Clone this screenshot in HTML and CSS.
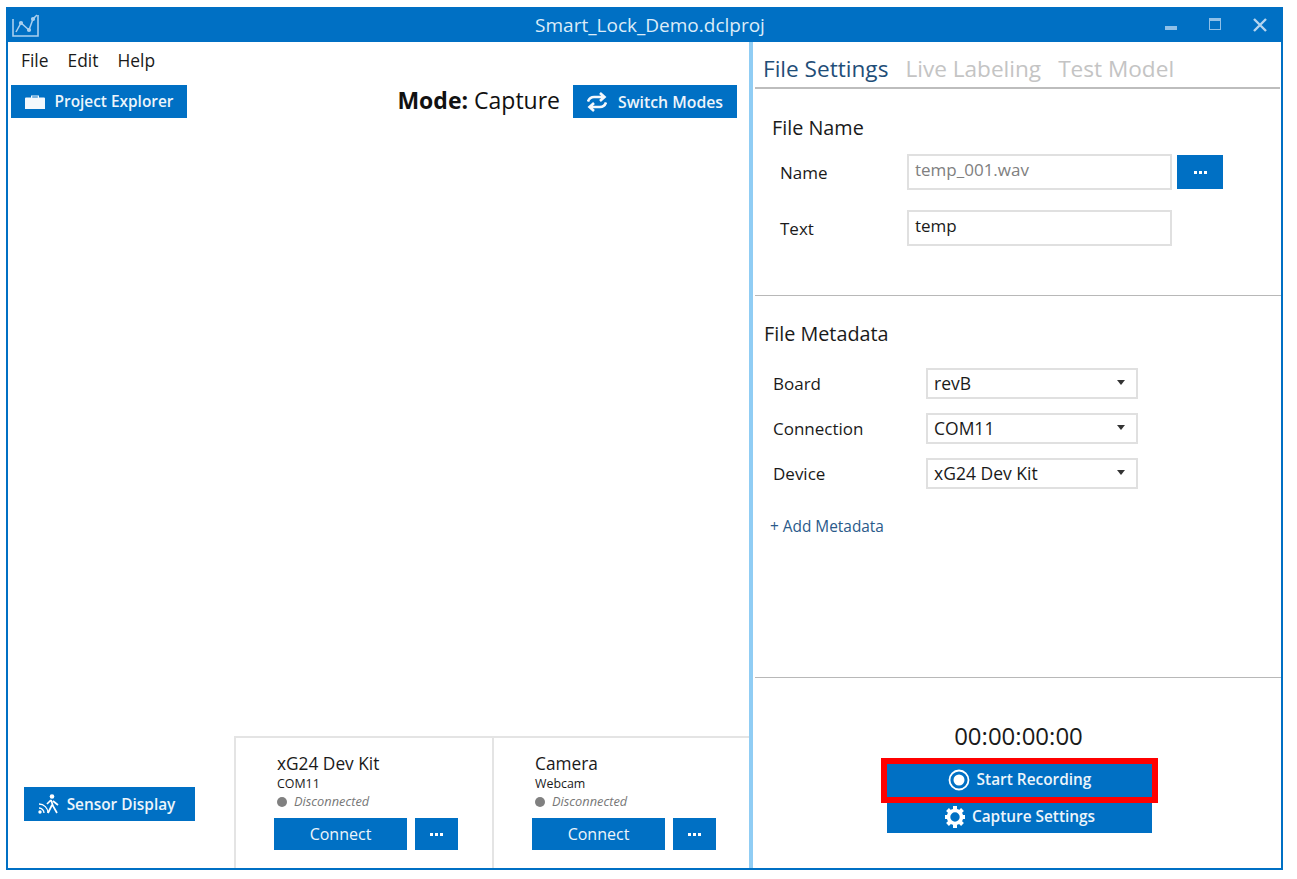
FILE: index.html
```html
<!DOCTYPE html>
<html>
  <head>
    <title>Smart_Lock_Demo.dclproj</title>
    <link rel="stylesheet" href="styles.css">
  </head>
  <body>
    <div class="window">
      <div class="titlebar">
        <svg class="app-icon" width="28" height="26" viewBox="0 0 28 26" fill="none" stroke="#a9cfee" stroke-width="1.6">
          <path d="M1 7v17h25V3"/>
          <path d="M4 20l5-9 8 7 4-11 4-4" stroke-width="1.500"/>
          <circle cx="9" cy="11" r="1.300" fill="#a9cfee"/>
          <circle cx="17" cy="18" r="1.300" fill="#a9cfee"/>
          <circle cx="21" cy="7" r="1.300" fill="#a9cfee"/>
        </svg>
        <div class="title">Smart_Lock_Demo.dclproj</div>
        <div class="window-controls">
          <svg width="14" height="14" viewBox="0 0 14 14"><rect x="1" y="8" width="12" height="4" fill="#8fc0e8"/></svg>
          <svg width="14" height="14" viewBox="0 0 14 14" fill="none" stroke="#8fc0e8"><rect x="1.500" y="0.500" width="11" height="11"/><rect x="1" y="0" width="12" height="3" fill="#8fc0e8" stroke="none"/></svg>
          <svg width="14" height="14" viewBox="0 0 14 14" stroke="#b5d5ef" stroke-width="2.400"><path d="M1 1l12 12M13 1L1 13"/></svg>
        </div>
      </div>
      <div class="panes">
        <div class="left-pane">
          <div class="menu">
            <span>File</span>
            <span>Edit</span>
            <span>Help</span>
          </div>
          <div class="toolbar">
            <button class="btn btn-explorer">
              <svg width="20" height="14" viewBox="0 0 20 14" fill="#f4f8fc"><path d="M1 2.500h18a1 1 0 0 1 1 1V14H0V3.500a1 1 0 0 1 1-1zM6 2.500V0.500h8v2h-1.200V1.500H7.200v1z"/></svg>
              Project Explorer
            </button>
            <div class="mode-group">
              <div class="mode"><b>Mode:</b> Capture</div>
              <button class="btn btn-switch">
                <svg width="20" height="20" viewBox="0 0 20 20" fill="none" stroke="#f4f8fc" stroke-width="2.600"><path d="M1 9.500C2 6.500 4 5 7 5h10M13 1l4.500 4L13 9M19 10.500C18 13.500 16 15 13 15H3M7 11l-4.500 4L7 19"/></svg>
                Switch Modes
              </button>
            </div>
          </div>
          <div class="bottom-row">
            <button class="btn btn-sensor">
              <svg width="22" height="20" viewBox="0 0 22 20" fill="none" stroke="#fff" stroke-width="1.700">
                <circle cx="14" cy="2.500" r="2.300" fill="#fff" stroke="none"/>
                <path d="M13 6l-4 4M13 6l2 6 4 7M14 11l-4 8M15 7l5 4"/>
                <path d="M1 10a9 9 0 0 1 9 9M1 14a5 5 0 0 1 5 5" stroke-width="1.300"/>
                <circle cx="2" cy="18" r="1.700" fill="#fff" stroke="none"/>
              </svg>
              Sensor Display
            </button>
            <div class="device-cards">
              <div class="device-card">
                <div class="device-name">xG24 Dev Kit</div>
                <div class="device-port">COM11</div>
                <div class="device-status"><i class="dot"></i><em>Disconnected</em></div>
                <div class="device-actions">
                  <button class="btn btn-connect">Connect</button>
                  <button class="btn btn-more"><i></i><i></i><i></i></button>
                </div>
              </div>
              <div class="device-card">
                <div class="device-name">Camera</div>
                <div class="device-port">Webcam</div>
                <div class="device-status"><i class="dot"></i><em>Disconnected</em></div>
                <div class="device-actions">
                  <button class="btn btn-connect">Connect</button>
                  <button class="btn btn-more"><i></i><i></i><i></i></button>
                </div>
              </div>
            </div>
          </div>
        </div>
        <div class="right-pane">
          <div class="tabs">
            <span class="tab active">File Settings</span>
            <span class="tab">Live Labeling</span>
            <span class="tab">Test Model</span>
          </div>
          <div class="section file-name">
            <div class="section-title">File Name</div>
            <div class="field-row">
              <label>Name</label>
              <div class="input disabled">temp_001.wav</div>
              <button class="btn btn-browse"><i></i><i></i><i></i></button>
            </div>
            <div class="field-row">
              <label>Text</label>
              <div class="input">temp</div>
            </div>
          </div>
          <div class="section metadata">
            <div class="section-title">File Metadata</div>
            <div class="meta-row">
              <label>Board</label>
              <div class="select">revB<i class="caret"></i></div>
            </div>
            <div class="meta-row">
              <label>Connection</label>
              <div class="select">COM11<i class="caret"></i></div>
            </div>
            <div class="meta-row">
              <label>Device</label>
              <div class="select">xG24 Dev Kit<i class="caret"></i></div>
            </div>
            <div class="add-meta">+ Add Metadata</div>
          </div>
          <div class="record">
            <div class="timer">00:00:00:00</div>
            <button class="btn btn-record btn-start">
              <svg width="22" height="22" viewBox="0 0 22 22"><circle cx="11" cy="11" r="9.500" fill="none" stroke="#fff" stroke-width="1.800"/><circle cx="11" cy="11" r="5.500" fill="#fff"/></svg>
              Start Recording
            </button>
            <button class="btn btn-record btn-settings">
              <svg width="22" height="22" viewBox="0 0 22 22"><circle cx="11" cy="11" r="6.500" fill="none" stroke="#fff" stroke-width="3.600"/><path d="M11 0v5M11 17v5M1 11h4M17 11h4M3.500 3.500l3 3M15.500 15.500l3 3M18.500 3.500l-3 3M6.500 15.500l-3 3" stroke="#fff" stroke-width="4"/></svg>
              Capture Settings
            </button>
          </div>
        </div>
      </div>
    </div>
  </body>
</html>
```

FILE: styles.css
```css
* {
  box-sizing: border-box;
}
body,
html {
  margin: 0;
  background: #fff;
}
body {
  padding: 7px 14px 9px 6px;
  font-family: "Open Sans", "Noto Sans", sans-serif;
  color: #1a1a1a;
}
.window {
  width: 1277px;
  height: 863px;
  border: 2px solid #0070c4;
  border-top: 0;
  display: flex;
  flex-direction: column;
}
.titlebar {
  height: 35px;
  margin: 0 -1px;
  flex: none;
  background: #0070c4;
  display: flex;
  align-items: center;
  padding-left: 5px;
}
.title {
  flex: 1;
  text-align: center;
  color: #dcecf8;
  font-size: 19px;
  padding-left: 96px;
}
.window-controls {
  display: flex;
  gap: 30px;
  padding-right: 15px;
  align-items: center;
}
.window-controls svg:last-child {
  margin-left: 1px;
}
.panes {
  flex: 1;
  display: flex;
  min-height: 0;
}
.btn {
  background: #0070c4;
  color: #edf5fb;
  border: none;
  font-family: inherit;
  font-size: 15.400px;
  font-weight: 600;
  display: flex;
  align-items: center;
  justify-content: center;
  padding: 0;
}
.left-pane {
  width: 741px;
  display: flex;
  flex-direction: column;
}
.menu {
  display: flex;
  gap: 19px;
  padding: 6px 0 0 13px;
  height: 36px;
  font-size: 17.400px;
}
.toolbar {
  display: flex;
  justify-content: space-between;
  padding: 7px 12px 0 3px;
  height: 76px;
}
.btn-explorer {
  width: 176px;
  height: 33px;
  gap: 10px;
}
.mode-group {
  display: flex;
  gap: 13px;
  align-items: flex-start;
}
.mode {
  font-size: 23px;
  line-height: 30px;
  color: #111;
}
.btn-switch {
  width: 164px;
  height: 33px;
  gap: 11px;
  font-size: 15.800px;
}
.bottom-row {
  margin-top: auto;
  display: flex;
  align-items: flex-end;
  height: 132px;
}
.btn-sensor {
  flex: none;
  width: 171px;
  height: 34px;
  margin: 0 39px 47px 16px;
  padding-right: 6px;
  gap: 7px;
}
.device-cards {
  display: flex;
  flex: none;
  width: 515px;
  height: 132px;
  border-top: 2px solid #e4e4e4;
  border-left: 2px solid #e4e4e4;
}
.device-card {
  width: 256px;
  padding: 15px 0 0 41px;
}
.device-card + .device-card {
  flex: 1;
  border-left: 2px solid #e4e4e4;
}
.device-name {
  font-size: 17.300px;
  line-height: 21px;
}
.device-port {
  font-size: 12.400px;
  line-height: 17px;
  margin-top: 1px;
}
.device-status {
  display: flex;
  align-items: center;
  gap: 7px;
  font-size: 12.800px;
  line-height: 17px;
  margin-top: 1px;
  color: #777;
}
.dot {
  width: 10px;
  height: 10px;
  border-radius: 50%;
  background: #808080;
}
.device-actions {
  display: flex;
  gap: 8px;
  margin: 8px 0 0 -3px;
}
.btn-connect {
  width: 133px;
  height: 32px;
  font-size: 16px;
  font-weight: 500;
}
.btn-more,
.btn-browse {
  width: 43px;
  height: 32px;
  gap: 2px;
}
.btn-more i,
.btn-browse i {
  width: 3px;
  height: 3px;
  background: #fff;
}
.right-pane {
  flex: 1;
  border-left: 4px solid #90cdf4;
  display: flex;
  flex-direction: column;
}
.tabs {
  display: flex;
  gap: 17px;
  height: 47px;
  margin: 0 1px 0 2px;
  padding: 10px 0 0 8px;
  border-bottom: 2px solid #bdbdbd;
}
.tab {
  font-size: 22.600px;
  line-height: 34px;
  color: #c4c4c4;
}
.tab.active {
  color: #1f4e78;
}
.section {
  margin-left: 2px;
  border-bottom: 1px solid #b8b8b8;
}
.section-title {
  font-size: 19.800px;
  line-height: 24px;
}
.file-name {
  height: 207px;
  padding: 27px 0 0 17px;
}
.field-row {
  display: flex;
  align-items: center;
  gap: 5px;
  height: 36px;
  margin-top: 14px;
}
.field-row + .field-row {
  margin-top: 20px;
}
.field-row label {
  width: 130px;
  padding-left: 8px;
  font-size: 17px;
}
.input {
  width: 265px;
  height: 36px;
  border: 2px solid #e0e0e0;
  padding-left: 6px;
  font-size: 17px;
  line-height: 28px;
}
.input.disabled {
  color: #808080;
}
.btn-browse {
  width: 46px;
  height: 34px;
}
.metadata {
  height: 382px;
  padding: 26px 0 0 9px;
}
.metadata .section-title {
  margin-bottom: 22px;
}
.meta-row {
  display: flex;
  align-items: center;
  height: 31px;
  margin-bottom: 14px;
}
.meta-row label {
  width: 162px;
  padding-left: 9px;
  font-size: 17px;
}
.select {
  position: relative;
  width: 212px;
  height: 31px;
  border: 2px solid #e0e0e0;
  padding-left: 6px;
  font-size: 17.500px;
  line-height: 27px;
}
.caret {
  position: absolute;
  right: 11px;
  top: 10px;
  border: 4px solid transparent;
  border-top: 5px solid #333;
  border-bottom: 0;
}
.add-meta {
  font-size: 15.400px;
  color: #2a5a8a;
  margin-top: 27px;
  padding-left: 6px;
}
.record {
  flex: 1;
  display: flex;
  flex-direction: column;
  align-items: center;
  padding-top: 43px;
  padding-left: 5px;
}
.timer {
  font-size: 24px;
  line-height: 30px;
  margin: 0 2px 13px 0;
}
.btn-record {
  flex: none;
  width: 265px;
  height: 30px;
  gap: 6px;
  padding-bottom: 3px;
}
.btn-start {
  height: 33px;
  gap: 7px;
  padding-bottom: 2px;
  outline: 6px solid #f00;
}
.btn-settings {
  margin-top: 6px;
}
```
